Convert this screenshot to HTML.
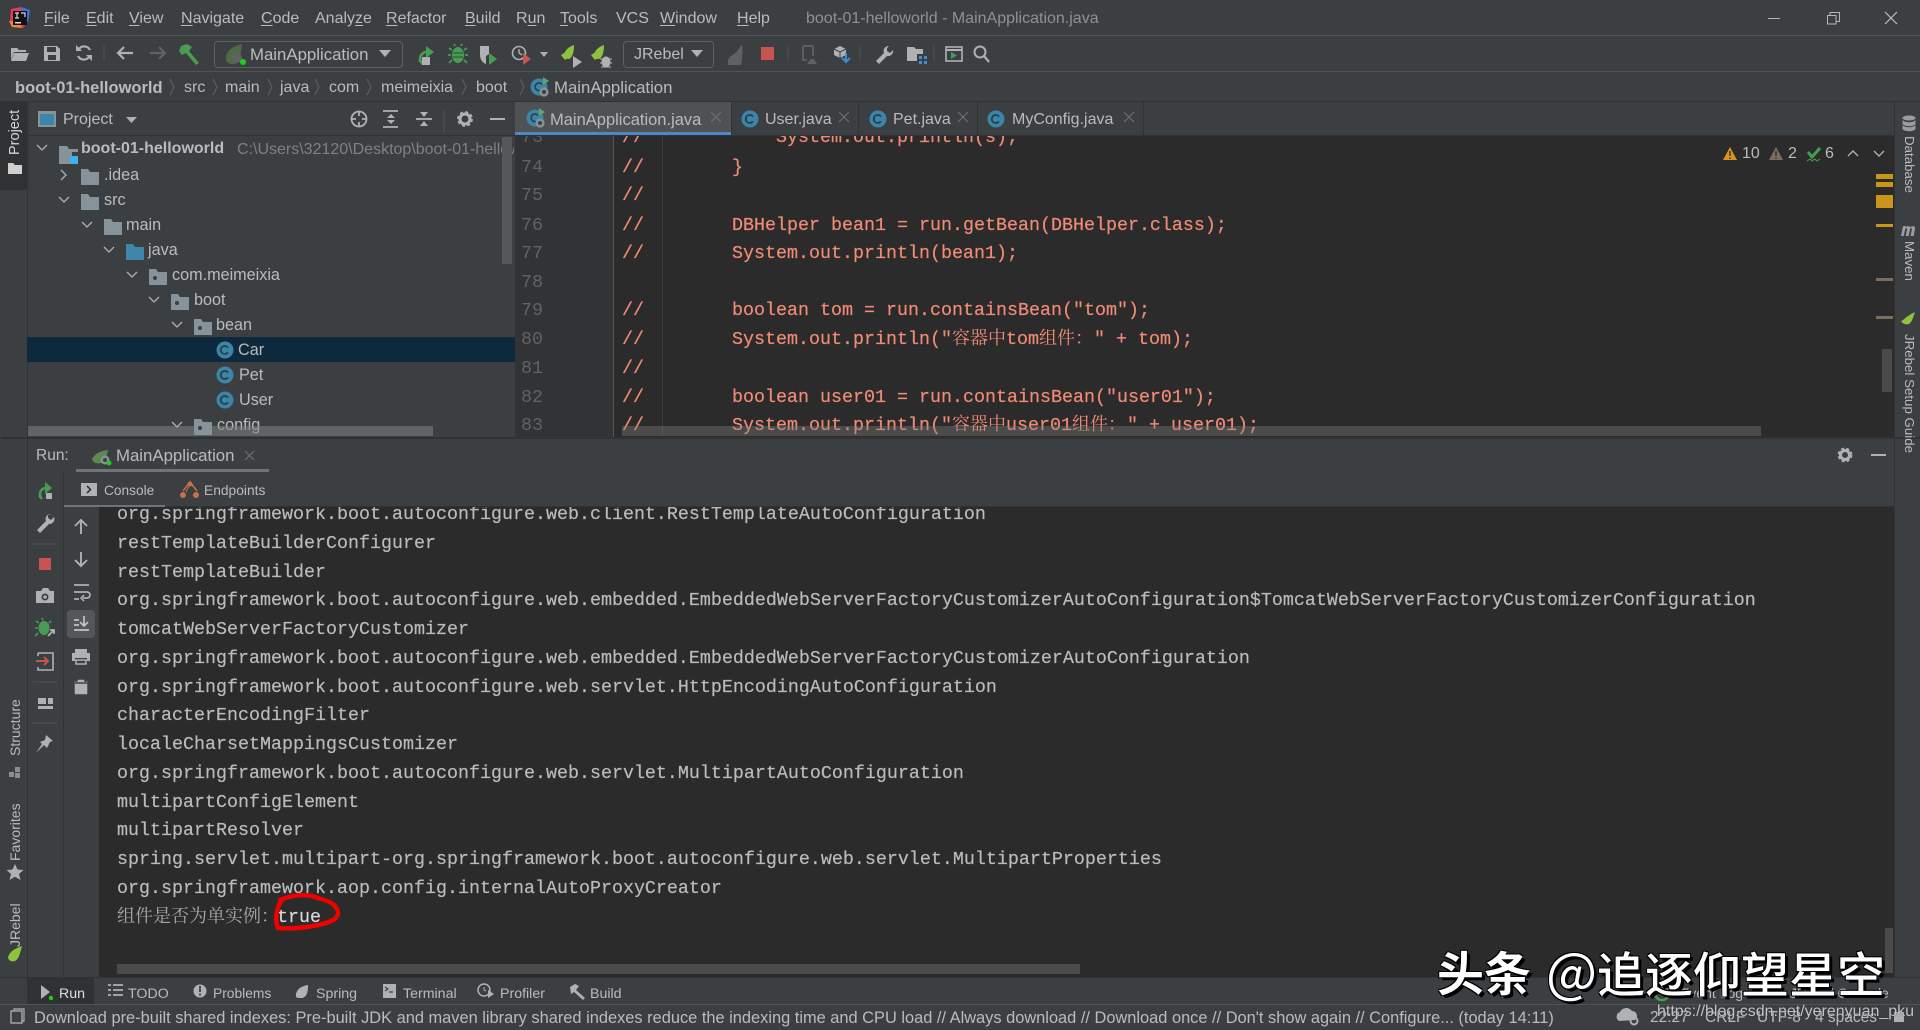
<!DOCTYPE html>
<html lang="en"><head><meta charset="utf-8"><title>boot-01-helloworld - MainApplication.java</title>
<style>
html,body{margin:0;padding:0;width:1920px;height:1030px;overflow:hidden;background:#3c3f41}
body{position:relative;font-family:"Liberation Sans","Noto Sans CJK SC",sans-serif;color:#bbb}
.b{position:absolute}
.t{position:absolute;white-space:nowrap;line-height:20px;color:#bbb}
.m{font-size:16px;top:9px}
.p{font-size:16px;top:78px}
.tr{font-size:16.2px}
.tab{font-size:16px;top:110px}
.v{position:absolute;white-space:nowrap;font-size:14px;line-height:16px;color:#bbb;transform-origin:0 0}
.vr{font-size:13.3px}
.bt{font-size:14.2px;top:984px}
.code,.con{position:absolute;white-space:pre;font-family:"Liberation Mono","Noto Sans CJK SC",monospace;font-size:18.33px;line-height:29px;margin-top:1px;-webkit-text-stroke:.2px}
.code{color:#f28b76}
.ln{position:absolute;left:521px;font-family:"Liberation Mono",monospace;font-size:18.33px;line-height:29px;color:#606366;margin-top:1px}
.con{color:#bbb;left:117px}
.c{font-family:"Noto Serif CJK SC",serif;font-size:18px;line-height:0;-webkit-text-stroke:0}
.clip{position:absolute;overflow:hidden}
svg{position:absolute;left:0;top:0}
u{text-decoration:underline;text-underline-offset:2px}
</style></head><body>

<!-- panels -->
<div class="b" style="left:0;top:35px;width:1920px;height:1px;background:#505355"></div>
<div class="b" style="left:0;top:71px;width:1920px;height:1px;background:#505355"></div>
<div class="b" style="left:0;top:101px;width:1920px;height:1px;background:#323232"></div>
<div class="b" style="left:0;top:102px;width:27px;height:88px;background:#2f3133"></div>
<div class="b" style="left:27px;top:102px;width:1px;height:875px;background:#323232"></div>
<div class="b" style="left:1894px;top:102px;width:1px;height:875px;background:#323232"></div>
<div class="b" style="left:28px;top:135px;width:1866px;height:1px;background:#323232"></div>
<!-- project selection -->
<div class="b" style="left:27px;top:337px;width:488px;height:25px;background:#0d293e"></div>
<!-- tab -->
<div class="b" style="left:515px;top:102px;width:216px;height:30px;background:#4e5254"></div>
<div class="b" style="left:515px;top:132px;width:216px;height:3px;background:#4a88c7"></div>
<div class="b" style="left:731px;top:102px;width:1px;height:33px;background:#323232"></div>
<div class="b" style="left:858px;top:102px;width:1px;height:33px;background:#323232"></div>
<div class="b" style="left:977px;top:102px;width:1px;height:33px;background:#323232"></div>
<div class="b" style="left:1143px;top:102px;width:1px;height:33px;background:#323232"></div>
<!-- editor -->
<div class="b" style="left:515px;top:136px;width:1379px;height:301px;background:#2b2b2b"></div>
<div class="b" style="left:515px;top:136px;width:98px;height:301px;background:#313335"></div>
<div class="b" style="left:613px;top:136px;width:1px;height:301px;background:#555"></div>
<div class="b" style="left:662px;top:136px;width:1px;height:301px;background:#393939"></div>
<div class="b" style="left:1px;top:437px;width:1920px;height:2px;background:#323232"></div>
<!-- console -->
<div class="b" style="left:99px;top:507px;width:1795px;height:470px;background:#2b2b2b"></div>
<div class="b" style="left:63px;top:472px;width:1px;height:505px;background:#323232"></div>
<div class="b" style="left:63px;top:506px;width:1831px;height:1px;background:#323232"></div>
<div class="b" style="left:76px;top:469px;width:193px;height:3px;background:#6e7478"></div>
<div class="b" style="left:64px;top:505px;width:101px;height:2px;background:#6e7478"></div>
<div class="b" style="left:67px;top:610px;width:28px;height:28px;border-radius:4px;background:#53575a"></div>
<div class="b" style="left:0;top:977px;width:1920px;height:1px;background:#323232"></div>
<div class="b" style="left:27px;top:978px;width:67px;height:26px;background:#2f3133"></div>
<div class="b" style="left:0;top:1004px;width:1920px;height:1px;background:#505355"></div>

<!-- menu -->
<div class="t m" style="left:44px"><u>F</u>ile</div>
<div class="t m" style="left:86px"><u>E</u>dit</div>
<div class="t m" style="left:129px"><u>V</u>iew</div>
<div class="t m" style="left:181px"><u>N</u>avigate</div>
<div class="t m" style="left:261px"><u>C</u>ode</div>
<div class="t m" style="left:315px">Analy<u>z</u>e</div>
<div class="t m" style="left:386px"><u>R</u>efactor</div>
<div class="t m" style="left:465px"><u>B</u>uild</div>
<div class="t m" style="left:516px">R<u>u</u>n</div>
<div class="t m" style="left:560px"><u>T</u>ools</div>
<div class="t m" style="left:616px">VCS</div>
<div class="t m" style="left:660px"><u>W</u>indow</div>
<div class="t m" style="left:737px"><u>H</u>elp</div>
<div class="t m" style="left:806px;color:#8f9193">boot-01-helloworld - MainApplication.java</div>

<!-- toolbar combos -->
<div class="b" style="left:214px;top:41px;width:187px;height:25px;border:1px solid #5e6060;border-radius:4px"></div>
<div class="t" style="left:250px;top:45px;font-size:16.8px">MainApplication</div>
<div class="b" style="left:623px;top:41px;width:89px;height:25px;border:1px solid #5e6060;border-radius:4px"></div>
<div class="t" style="left:634px;top:45px;font-size:16px">JRebel</div>

<!-- breadcrumb -->
<div class="t p" style="left:15px;font-weight:700;font-size:16.5px">boot-01-helloworld</div>
<div class="t p" style="left:184px">src</div>
<div class="t p" style="left:225px">main</div>
<div class="t p" style="left:280px">java</div>
<div class="t p" style="left:329px">com</div>
<div class="t p" style="left:381px">meimeixia</div>
<div class="t p" style="left:476px">boot</div>
<div class="t p" style="left:554px;font-size:16.8px">MainApplication</div>

<!-- tool header / tabs -->
<div class="t" style="left:63px;top:110px;font-size:16px">Project</div>
<div class="t tab" style="left:550px;font-size:16.5px">MainApplication.java</div>
<div class="t tab" style="left:765px">User.java</div>
<div class="t tab" style="left:893px">Pet.java</div>
<div class="t tab" style="left:1012px">MyConfig.java</div>

<!-- project tree -->
<div class="clip" style="left:28px;top:136px;width:486px;height:301px">
<div class="t" style="left:53px;top:3px;font-size:16px;font-weight:700">boot-01-helloworld</div>
<div class="t" style="left:209px;top:4px;font-size:16px;color:#808080">C:\Users\32120\Desktop\boot-01-helloworld</div>
<div class="t tr" style="left:76px;top:29px">.idea</div>
<div class="t tr" style="left:76px;top:54px">src</div>
<div class="t tr" style="left:98px;top:79px">main</div>
<div class="t tr" style="left:120px;top:104px">java</div>
<div class="t tr" style="left:144px;top:129px">com.meimeixia</div>
<div class="t tr" style="left:166px;top:154px">boot</div>
<div class="t tr" style="left:188px;top:179px">bean</div>
<div class="t tr" style="left:210px;top:204px">Car</div>
<div class="t tr" style="left:211px;top:229px">Pet</div>
<div class="t tr" style="left:211px;top:254px">User</div>
<div class="t tr" style="left:189px;top:279px">config</div>
</div>

<!-- editor code -->
<div class="clip" style="left:515px;top:136px;width:1379px;height:301px">
<div class="ln" style="left:6px;top:-14px">73</div>
<div class="ln" style="left:6px;top:16px">74</div>
<div class="ln" style="left:6px;top:44px">75</div>
<div class="ln" style="left:6px;top:74px">76</div>
<div class="ln" style="left:6px;top:102px">77</div>
<div class="ln" style="left:6px;top:131px">78</div>
<div class="ln" style="left:6px;top:159px">79</div>
<div class="ln" style="left:6px;top:188px">80</div>
<div class="ln" style="left:6px;top:217px">81</div>
<div class="ln" style="left:6px;top:246px">82</div>
<div class="ln" style="left:6px;top:274px">83</div>
<div class="code" style="left:107px;top:-14px">//            System.out.println(s);</div>
<div class="code" style="left:107px;top:16px">//        }</div>
<div class="code" style="left:107px;top:44px">//</div>
<div class="code" style="left:107px;top:74px">//        DBHelper bean1 = run.getBean(DBHelper.class);</div>
<div class="code" style="left:107px;top:102px">//        System.out.println(bean1);</div>
<div class="code" style="left:107px;top:159px">//        boolean tom = run.containsBean("tom");</div>
<div class="code" style="left:107px;top:188px">//        System.out.println("<span class="c">容器中</span>tom<span class="c">组件<span style="letter-spacing:-10px">：</span></span> " + tom);</div>
<div class="code" style="left:107px;top:217px">//</div>
<div class="code" style="left:107px;top:246px">//        boolean user01 = run.containsBean("user01");</div>
<div class="code" style="left:107px;top:274px">//        System.out.println("<span class="c">容器中</span>user01<span class="c">组件<span style="letter-spacing:-10px">：</span></span> " + user01);</div>
</div>
<div class="t" style="left:1742px;top:144px;font-size:16px">10</div>
<div class="t" style="left:1788px;top:144px;font-size:16px">2</div>
<div class="t" style="left:1825px;top:144px;font-size:16px">6</div>

<!-- markers & scrollbars -->
<div class="b" style="left:1876px;top:174px;width:17px;height:5px;background:#c9961a"></div>
<div class="b" style="left:1876px;top:182px;width:17px;height:5px;background:#c9961a"></div>
<div class="b" style="left:1876px;top:195px;width:17px;height:13px;background:#c9961a"></div>
<div class="b" style="left:1876px;top:224px;width:17px;height:3px;background:#c9961a"></div>
<div class="b" style="left:1876px;top:278px;width:17px;height:3px;background:#7a6f5d"></div>
<div class="b" style="left:1876px;top:316px;width:17px;height:3px;background:#7a6f5d"></div>
<div class="b" style="left:1882px;top:349px;width:10px;height:43px;background:#4b4b4b"></div>
<div class="b" style="left:622px;top:426px;width:1139px;height:10px;background:rgba(130,130,130,.38)"></div>
<div class="b" style="left:28px;top:426px;width:405px;height:10px;background:rgba(130,130,130,.55)"></div>
<div class="b" style="left:502px;top:137px;width:10px;height:127px;background:#55585a"></div>

<!-- run header -->
<div class="t" style="left:36px;top:446px;font-size:15.5px">Run:</div>
<div class="t" style="left:116px;top:446px;font-size:16.8px">MainApplication</div>
<div class="t" style="left:104px;top:481px;font-size:13.7px">Console</div>
<div class="t" style="left:204px;top:481px;font-size:13.8px">Endpoints</div>

<!-- console -->
<div class="clip" style="left:0;top:507px;width:1894px;height:470px">
<div class="con" style="top:-8px">org.springframework.boot.autoconfigure.web.client.RestTemplateAutoConfiguration</div>
<div class="con" style="top:21px">restTemplateBuilderConfigurer</div>
<div class="con" style="top:50px">restTemplateBuilder</div>
<div class="con" style="top:78px">org.springframework.boot.autoconfigure.web.embedded.EmbeddedWebServerFactoryCustomizerAutoConfiguration$TomcatWebServerFactoryCustomizerConfiguration</div>
<div class="con" style="top:107px">tomcatWebServerFactoryCustomizer</div>
<div class="con" style="top:136px">org.springframework.boot.autoconfigure.web.embedded.EmbeddedWebServerFactoryCustomizerAutoConfiguration</div>
<div class="con" style="top:165px">org.springframework.boot.autoconfigure.web.servlet.HttpEncodingAutoConfiguration</div>
<div class="con" style="top:193px">characterEncodingFilter</div>
<div class="con" style="top:222px">localeCharsetMappingsCustomizer</div>
<div class="con" style="top:251px">org.springframework.boot.autoconfigure.web.servlet.MultipartAutoConfiguration</div>
<div class="con" style="top:280px">multipartConfigElement</div>
<div class="con" style="top:308px">multipartResolver</div>
<div class="con" style="top:337px">spring.servlet.multipart-org.springframework.boot.autoconfigure.web.servlet.MultipartProperties</div>
<div class="con" style="top:366px">org.springframework.aop.config.internalAutoProxyCreator</div>
<div class="con" style="top:395px"><span class="c" style="color:#a8a8a8">组件是否为单实例<span style="letter-spacing:-2px">：</span></span><span style="color:#d8d8d8">true</span></div>
</div>
<div class="b" style="left:117px;top:964px;width:963px;height:10px;background:#4b4b4b"></div>
<div class="b" style="left:1885px;top:928px;width:8px;height:45px;background:#4b4b4b"></div>

<!-- vertical labels left -->
<div class="v" style="left:7px;top:155px;transform:rotate(-90deg);font-size:14.5px;color:#d5d5d5">Project</div>
<div class="v" style="left:7px;top:756px;transform:rotate(-90deg)">Structure</div>
<div class="v" style="left:7px;top:861px;transform:rotate(-90deg)">Favorites</div>
<div class="v" style="left:7px;top:947px;transform:rotate(-90deg)">JRebel</div>
<!-- vertical labels right -->
<div class="v vr" style="left:1917px;top:136px;transform:rotate(90deg)">Database</div>
<div class="v vr" style="left:1917px;top:241px;transform:rotate(90deg)">Maven</div>
<div class="v vr" style="left:1917px;top:334px;transform:rotate(90deg)">JRebel Setup Guide</div>

<!-- bottom tool strip -->
<div class="t bt" style="left:59px;color:#ddd">Run</div>
<div class="t bt" style="left:128px">TODO</div>
<div class="t bt" style="left:213px;font-size:13.8px">Problems</div>
<div class="t bt" style="left:316px">Spring</div>
<div class="t bt" style="left:403px">Terminal</div>
<div class="t bt" style="left:500px">Profiler</div>
<div class="t bt" style="left:590px">Build</div>
<div class="t" style="left:1680px;top:983px;font-size:14px">Event Log</div>
<div class="t" style="left:1790px;top:983px;font-size:14px">JRebel Console</div>

<!-- status bar -->
<div class="t" style="left:34px;top:1008px;font-size:16.4px">Download pre-built shared indexes: Pre-built JDK and maven library shared indexes reduce the indexing time and CPU load // Always download // Download once // Don't show again // Configure... (today 14:11)</div>
<div class="t" style="left:1650px;top:1008px;font-size:15.5px">22:27</div>
<div class="t" style="left:1705px;top:1008px;font-size:15.5px">CRLF</div>
<div class="t" style="left:1757px;top:1008px;font-size:15.5px">UTF-8</div>
<div class="t" style="left:1815px;top:1008px;font-size:15.5px">4 spaces</div>

<!-- icons -->
<svg width="1920" height="1030" viewBox="0 0 1920 1030" fill="none">
<defs>
<symbol id="fo" viewBox="0 0 18 16" overflow="visible"><path d="M0 0h7l2 3h9v13H0z" fill="#87939a"/></symbol>
<symbol id="pk" viewBox="0 0 18 16" overflow="visible"><path d="M0 0h7l2 3h9v13H0z" fill="#87939a"/><circle cx="6" cy="9" r="2" fill="#3c3f41"/></symbol>
<symbol id="cl" viewBox="0 0 18 18" overflow="visible"><circle cx="9" cy="9" r="8.5" fill="#3b86a8"/><path d="M12 6.7A4 4 0 1 0 12 11.3" stroke="#2b3d47" stroke-width="1.8"/></symbol>
<symbol id="sb" viewBox="0 0 20 20" overflow="visible"><circle cx="9" cy="10" r="8.5" fill="#3b86a8"/><path d="M12 7.5A3.8 3.8 0 1 0 11 13" stroke="#2b3d47" stroke-width="1.6"/><path d="M13 0l6 4-6 4z" fill="#59a869"/><circle cx="14" cy="15" r="4.6" fill="#8a9196"/><circle cx="14" cy="15" r="2" fill="#3c3f41"/></symbol>
</defs>

<!-- IDEA logo -->
<path d="M11 9l10-2 9 3-2 12-5 6-10-1-3-6z" fill="#e8385b"/><path d="M21 7l9 3-2 12-4 1z" fill="#3d6fe0"/><path d="M9 21l3 6 10 1-3-6z" fill="#f0882c"/><rect x="13" y="11" width="14" height="14" fill="#111"/><rect x="15" y="22" width="6" height="1.5" fill="#ddd"/><path d="M15 13h4M17 13v5M15 18h4M21 13h4v4" stroke="#ddd" stroke-width="1.2"/>

<!-- window controls -->
<path d="M1768 18.5h12" stroke="#b5b5b5" stroke-width="1"/>
<path d="M1827.5 15.5h8.5v8.5h-8.5zM1830 15.5v-3h9.5v9h-3.5" stroke="#b5b5b5" stroke-width="1"/>
<path d="M1885 12l12 12M1897 12l-12 12" stroke="#c5c5c5" stroke-width="1.1"/>

<g transform="translate(0 9)">
<!-- toolbar left -->
<path d="M11 39h6l2 2h7v2H14l-3 8zM14 44h15l-3 8H11z" fill="#afb1b3"/>
<path d="M44 37h13l3 3v12H44zM47 38v5h9v-5zM48 46h8v5h-8z" fill="#afb1b3" fill-rule="evenodd"/>
<path d="M90 41a6.5 6.5 0 0 0-11-1M78 47a6.5 6.5 0 0 0 11 1" stroke="#afb1b3" stroke-width="2.2"/><path d="M76 36v6h6zM92 52v-6h-6z" fill="#afb1b3"/><path d="M104 36v16" stroke="#505355"/>
<path d="M133 44h-15M124 38l-6 6 6 6" stroke="#afb1b3" stroke-width="2.2"/>
<path d="M150 44h15M159 38l6 6-6 6" stroke="#5f6264" stroke-width="2.2"/>
<path d="M181 37l6-2 5 3-3 4 10 12-3 2-10-12-4 2-3-4z" fill="#499c54"/>

<!-- config combo -->
<g transform="translate(0 -3)"><path d="M226 54c-1-9 7-14 16-16-1 8-2 18-7 20-5 1-8-1-9-4z" fill="#4f6b45"/><circle cx="237" cy="52" r="5" fill="#5f6264"/><circle cx="243" cy="56" r="3" fill="#17d317"/></g>
<path d="M379 41h12l-6 7z" fill="#afb1b3"/>

<!-- run icons -->
<g transform="translate(-7 0)"><path d="M427 53v-3a7 7 0 0 1 7-7h2" stroke="#499c54" stroke-width="2.6"/><path d="M430 55a8 8 0 0 1-3-5" stroke="#499c54" stroke-width="2.6"/><path d="M433 37l8 6-8 6z" fill="#499c54"/><rect x="429" y="48" width="8" height="8" fill="#afb1b3"/></g>
<ellipse cx="458" cy="46" rx="6" ry="8" fill="#499c54"/><path d="M452 41l-3-2M464 41l3-2M451 46h-3M465 46h3M452 51l-3 3M464 51l3 3M455 37l-1-2M461 37l1-2" stroke="#499c54" stroke-width="1.8"/><path d="M453 44h10M453 48h10" stroke="#2f4a34" stroke-width="1"/>
<g transform="translate(-2 0)"><path d="M482 37h9v8l-3 2v8c-3-1-6-4-6-9z" fill="#afb1b3"/><path d="M491 44l8 6-8 6z" fill="#499c54"/></g>
<circle cx="519" cy="44" r="6.5" stroke="#afb1b3" stroke-width="1.6"/><path d="M519 40v4l3 2" stroke="#afb1b3" stroke-width="1.4"/><path d="M523 44l8 6-8 6z" fill="#c75450"/><path d="M540 43h8l-4 5z" fill="#afb1b3"/>
<g transform="translate(3 0)"><path d="M560 49c1-7 5-11 11-13 0 6-1 12-5 14z" fill="#8ec23f"/><path d="M558 46l3-2 4 5-3 2z" fill="#8ec23f"/><path d="M570 47l9 6-9 6z" fill="#afb1b3"/></g>
<path d="M593 49c1-7 5-11 11-13 0 6-1 12-5 14z" fill="#8ec23f"/><path d="M591 46l3-2 4 5-3 2z" fill="#8ec23f"/><ellipse cx="606" cy="53" rx="4.5" ry="5.5" fill="#afb1b3"/><path d="M600 50l12 0M600 54h12M601 58h10" stroke="#afb1b3"/>
<path d="M691 41h12l-6 7z" fill="#afb1b3"/>
<path d="M728 52c1-6 7-6 9-10l5-6c1 6 0 16-1 20h-13z" fill="#5f6264"/>
<rect x="761" y="38" width="13" height="13" fill="#c75450"/>
<path d="M788 36v16" stroke="#505355"/>
<path d="M803 37h10v10M803 37v14h4" stroke="#5f6264" stroke-width="1.8"/><path d="M807 55l4-5h3l3 5z" fill="#5f6264"/>
<path d="M834 40l6-3 6 3v6l-6 3-6-3z" fill="#afb1b3"/><path d="M834 40l6 3 6-3M840 43v6" stroke="#3c3f41"/><path d="M846 44v8M842 49l4 4 4-4" stroke="#3d8fd1" stroke-width="2"/>
<path d="M860 36v16" stroke="#505355"/>
<path d="M889 37a5 5 0 0 0-5 7l-8 8 3 3 8-8a5 5 0 0 0 6-6l-3 3-3-2v-3z" fill="#afb1b3"/>
<path d="M907 38h7l2 2h7v5h-6v7h-10z" fill="#afb1b3"/><rect x="919" y="47" width="3" height="3" fill="#3d8fd1"/><rect x="924" y="47" width="3" height="3" fill="#3d8fd1"/><rect x="919" y="52" width="3" height="3" fill="#3d8fd1"/><rect x="924" y="52" width="3" height="3" fill="#3d8fd1"/>
<path d="M934 36v16" stroke="#505355"/>
<rect x="946" y="38" width="16" height="14" stroke="#afb1b3" stroke-width="1.6"/><path d="M946 41h16" stroke="#afb1b3" stroke-width="2"/><path d="M951 43l6 3.5-6 3.5z" fill="#499c54"/>
<circle cx="980" cy="43" r="5.5" stroke="#afb1b3" stroke-width="2"/><path d="M984 47l5 6" stroke="#afb1b3" stroke-width="2.2"/>
</g>

<!-- breadcrumb chevrons -->
<path d="M170 79l4 8-4 8M213 79l4 8-4 8M268 79l4 8-4 8M315 79l4 8-4 8M367 79l4 8-4 8M462 79l4 8-4 8M520 79l4 8-4 8" stroke="#5e6264"/>
<use href="#sb" x="530" y="77" width="20" height="20"/>

<!-- project header -->
<rect x="39" y="112" width="16" height="14" fill="#3b86a8" stroke="#87939a" stroke-width="2"/><rect x="38" y="111" width="18" height="3" fill="#87939a"/>
<path d="M126 117h11l-5.500 6z" fill="#afb1b3"/>
<circle cx="359" cy="119" r="7.500" stroke="#afb1b3" stroke-width="1.800"/><path d="M359 111v5M359 122v5M351 119h5M362 119h5" stroke="#afb1b3" stroke-width="1.800"/>
<path d="M383 111h15M383 127h15" stroke="#afb1b3" stroke-width="1.800"/><path d="M391 114l4 4h-8zM391 124l4-4h-8z" fill="#afb1b3"/>
<path d="M416 119h16" stroke="#afb1b3" stroke-width="1.800"/><path d="M424 117l4-5h-8zM424 121l4 5h-8z" fill="#afb1b3"/>
<path d="M444 110v22" stroke="#505355"/>
<circle cx="465" cy="119" r="5" stroke="#afb1b3" stroke-width="3"/><circle cx="465" cy="119" r="7" stroke="#afb1b3" stroke-width="1.800" stroke-dasharray="3 2.500"/>
<path d="M490 119h15" stroke="#afb1b3" stroke-width="2"/>
<use href="#sb" x="526" y="108" width="20" height="20"/>
<path d="M711 112l10 10M721 112l-10 10M839 112l10 10M849 112l-10 10M958 112l10 10M968 112l-10 10M1124 112l10 10M1134 112l-10 10" stroke="#6e7173" stroke-width="1.100"/>
<use href="#cl" x="741" y="110" width="18" height="18"/><use href="#cl" x="869" y="110" width="18" height="18"/><use href="#cl" x="987" y="110" width="18" height="18"/>

<!-- left strip -->
<path d="M8 163h5l2 2h7v9H8z" fill="#cfcfcf"/>
<path d="M9 772h5v5H9zM15 767h5v5h-5zM15 773h5v5h-5z" fill="#8a8f92"/>
<path d="M15 864l2.500 5.500 6 .5-4.500 4 1.500 6-5.500-3.300-5.500 3.300 1.500-6-4.500-4 6-.5z" fill="#afb1b3"/>
<path d="M8 958c1-6 6-9 14-12-2 7-3 13-7 15-3 1-6 0-7-3z" fill="#8ec23f"/>

<!-- tree icons -->
<path d="M37 145l5 5 5-5" stroke="#afb1b3" stroke-width="1.300"/>
<path d="M59 146h8l2 3h9v3h-6v12H59z" fill="#87939a"/><rect x="70" y="156" width="8" height="8" fill="#3db3e8"/>
<path d="M61 170l5 5-5 5" stroke="#afb1b3" stroke-width="1.300"/>
<use href="#fo" x="81" y="169" width="18" height="16"/>
<path d="M59 197l5 5 5-5" stroke="#afb1b3" stroke-width="1.300"/>
<use href="#fo" x="81" y="194" width="18" height="16"/>
<path d="M82 222l5 5 5-5" stroke="#afb1b3" stroke-width="1.300"/>
<use href="#fo" x="104" y="219" width="18" height="16"/>
<path d="M104 247l5 5 5-5" stroke="#afb1b3" stroke-width="1.300"/>
<path d="M126 244h7l2 3h9v13h-18z" fill="#3f86aa"/>
<path d="M127 272l5 5 5-5" stroke="#afb1b3" stroke-width="1.300"/>
<use href="#pk" x="149" y="269" width="18" height="16"/>
<path d="M149 297l5 5 5-5" stroke="#afb1b3" stroke-width="1.300"/>
<use href="#pk" x="171" y="294" width="18" height="16"/>
<path d="M172 322l5 5 5-5" stroke="#afb1b3" stroke-width="1.300"/>
<use href="#pk" x="194" y="319" width="18" height="16"/>
<use href="#cl" x="216" y="341" width="18" height="18"/>
<use href="#cl" x="216" y="366" width="18" height="18"/>
<use href="#cl" x="216" y="391" width="18" height="18"/>
<path d="M172 422l5 5 5-5" stroke="#afb1b3" stroke-width="1.300"/>
<use href="#pk" x="194" y="419" width="18" height="16"/>

<!-- inspections -->
<path d="M1730 147l7 13h-14z" fill="#d9951a"/><path d="M1730 151v5M1730 157.500v1.500" stroke="#333" stroke-width="1.500"/>
<path d="M1776 147l7 13h-14z" fill="#7a6f5d"/><path d="M1776 151v5M1776 157.500v1.500" stroke="#333" stroke-width="1.500"/>
<path d="M1808 152l4 5 8-9" stroke="#499c54" stroke-width="3"/><path d="M1807 161l3-2 2 2 3-2 2 2 3-2" stroke="#499c54"/>
<path d="M1848 156l5-5 5 5M1874 151l5 5 5-5" stroke="#afb1b3" stroke-width="1.400"/>

<!-- right strip -->
<ellipse cx="1909" cy="118" rx="6.500" ry="2.500" fill="#9a9da0"/><path d="M1902.500 120v4c2 3 11 3 13 0v-4c-2 3-11 3-13 0zM1902.500 125v4c2 3 11 3 13 0v-4c-2 3-11 3-13 0z" fill="#9a9da0"/>
<path d="M1901 236l2-10h3l-.400 1.500c1.500-2 4-2 4.500 0 1.500-2 5.500-2 5 1l-1.500 7.500h-3l1.400-7c0-1-1.500-1-2 .5l-1.300 6.500h-3l1.400-7c0-1-1.500-1-2 .5l-1.300 6.500z" fill="#9a9da0"/>
<path d="M1901 321c3-1 4-4 14-9-2 6-3 10-6 12-3 1-6 0-8-3z" fill="#8ec23f"/>

<!-- run header icons -->
<path d="M92 459c3-6 9-8 16-9-1 5-2 12-7 13-4 1-8 0-9-4z" fill="#5c8a52"/><circle cx="105" cy="460" r="4.500" fill="#8a9196"/><circle cx="105" cy="460" r="2" fill="#3c3f41"/><circle cx="109" cy="463" r="2.500" fill="#17d317"/>
<path d="M245 451l9 9M254 451l-9 9" stroke="#6e7173" stroke-width="1.200"/>
<circle cx="1845" cy="455" r="4.500" stroke="#afb1b3" stroke-width="3"/><circle cx="1845" cy="455" r="6.500" stroke="#afb1b3" stroke-width="1.800" stroke-dasharray="3 2.300"/>
<path d="M1871 455h15" stroke="#afb1b3" stroke-width="2"/>
<rect x="81" y="483" width="16" height="13" fill="#afb1b3"/><path d="M87 486l3.500 3.500-3.500 3.500" stroke="#2b2b2b" stroke-width="1.500"/>
<path d="M183 491l7-9 7 9" stroke="#c8704a" stroke-width="1.500"/><circle cx="190" cy="484" r="2.500" fill="#c8704a"/><circle cx="183" cy="495" r="3" fill="#c8704a"/><circle cx="196" cy="495" r="3" fill="#c8704a"/><path d="M190 484l-4 8" stroke="#c8704a"/>

<!-- run col 1 -->
<path d="M40 498v-4a6 6 0 0 1 6-6h2" stroke="#499c54" stroke-width="2.500"/><path d="M42 499a7 7 0 0 1-2-4" stroke="#499c54" stroke-width="2.500"/><path d="M45 482l7 6-7 6z" fill="#499c54"/><rect x="46" y="493" width="6" height="6" fill="#afb1b3"/>
<path d="M51 514a5 5 0 0 0-5 7l-9 9 3 3 9-9a5 5 0 0 0 5-7l-3 3-3-2v-3z" fill="#afb1b3"/>
<path d="M33 544h24M33 682h24M33 723h24" stroke="#505355"/>
<rect x="39" y="558" width="12" height="12" fill="#c75450"/>
<path d="M36 591h5l2-3h5l2 3h4v12H36z" fill="#afb1b3"/><circle cx="45" cy="597" r="3.500" fill="#3c3f41"/><circle cx="45" cy="597" r="1.800" fill="#afb1b3"/>
<ellipse cx="44" cy="628" rx="5.500" ry="7" fill="#499c54"/><path d="M39 623l-3-2M49 623l2-2M38 628h-3M38 633l-3 3M43 620l-1-2" stroke="#499c54" stroke-width="1.600"/><path d="M48 636l6-6M50 630h4v4" stroke="#afb1b3" stroke-width="1.800"/>
<path d="M38 653h15v17H38v-3M38 653v3" stroke="#afb1b3" stroke-width="1.600"/><path d="M36 661h11" stroke="#c75450" stroke-width="2"/><path d="M44 657l4 4-4 4" stroke="#c75450" stroke-width="2"/>
<path d="M38 698h8v6h-8zM48 698h5v6h-5zM38 706h15v3H38z" fill="#afb1b3"/>
<path d="M46 735l7 6-3 1-3 6-3-3-8 8 6-9-2-2 5-2z" fill="#afb1b3"/>

<!-- run col 2 -->
<path d="M81 534v-14M75 526l6-6 6 6M81 566v-14M75 560l6 6 6-6" stroke="#afb1b3" stroke-width="1.900"/>
<path d="M74 585h15M74 592h13a2.500 2.500 0 0 1 0 6h-4M74 599h5" stroke="#afb1b3" stroke-width="1.700"/><path d="M84 595l-3 3 3 3" stroke="#afb1b3" stroke-width="1.500"/>
<path d="M74 630h15M74 620h5M74 625h5M84 616v9M80 622l4 4 4-4" stroke="#c2c4c6" stroke-width="1.700"/>
<path d="M75 649h12v4h3v8h-3v-3h-12v3h-3v-8h3z" fill="#afb1b3"/><rect x="76" y="660" width="10" height="4" stroke="#afb1b3" stroke-width="1.500"/>
<path d="M74 682h14M78 682v-2h6v2M75 684h12v10H75z" fill="#afb1b3" stroke="#afb1b3" stroke-width=".6"/>

<!-- bottom strip icons -->
<path d="M41 985l9 7-9 7z" fill="#afb1b3"/><circle cx="51" cy="998" r="2.200" fill="#17d317"/>
<path d="M113 985h10M113 990h10M113 995h10M108 985h3M108 990h3M108 995h3" stroke="#afb1b3" stroke-width="1.800"/>
<circle cx="200" cy="991" r="6.500" fill="#afb1b3"/><path d="M200 986v6M200 993.500v2" stroke="#3c3f41" stroke-width="1.800"/>
<path d="M296 997c-1-7 5-11 12-12 0 7-1 12-6 13-3 0-5 0-6-1z" fill="#afb1b3"/>
<rect x="383" y="984" width="13" height="14" fill="#afb1b3"/><path d="M385 987l3 2-3 2M389 992h4" stroke="#3c3f41" stroke-width="1.200"/>
<circle cx="484" cy="990" r="6" stroke="#afb1b3" stroke-width="1.500"/><path d="M484 987v3l2 1" stroke="#afb1b3"/><path d="M488 990l6 4-6 4z" fill="#afb1b3"/>
<path d="M570 987l5-3 4 2-3 4 9 8-2 2-9-8-3 2z" fill="#afb1b3"/>
<circle cx="1662" cy="993" r="7" stroke="#499c54" stroke-width="2.500"/>
<!-- status icons -->
<rect x="11" y="1011" width="11" height="12" stroke="#afb1b3" stroke-width="1.300"/><path d="M14 1011v-2h10v12h-2" stroke="#afb1b3" stroke-width="1.200"/>
<path d="M1619 1021a5 5 0 0 1 1-9 7 7 0 0 1 12-1 5 5 0 0 1 3 9z" fill="#afb1b3"/><circle cx="1634" cy="1021" r="3.500" stroke="#afb1b3" stroke-width="2"/>
<rect x="1894" y="1012" width="10" height="10" fill="#afb1b3"/>

<!-- red annotation -->
<path d="M280 900c12-5 26-7 38-2 8 2 19 6 20 14 1 7-10 11-20 13-14 3-27 4-40 3-3-7-2-16 1-23 1-2 2-4 3-5" stroke="#f00000" stroke-width="4.500" stroke-linecap="round" stroke-linejoin="round"/>
</svg>

<!-- watermark -->
<div class="t" style="left:1437px;top:936px;font-family:'Noto Sans CJK SC',sans-serif;font-size:47px;line-height:70px;font-weight:700;color:#fff;text-shadow:3px 3px 0 #000,-1px -1px 0 #000,1px -1px 0 #000,-1px 1px 0 #000">头条</div>
<div class="t" style="left:1546px;top:934px;font-family:'Noto Sans CJK SC',sans-serif;font-size:54px;line-height:70px;font-weight:400;color:#fff;text-shadow:3px 3px 0 #000,-1px -1px 0 #000,1px -1px 0 #000,-1px 1px 0 #000">@</div>
<div class="t" style="left:1597px;top:936px;font-family:'Noto Sans CJK SC',sans-serif;font-size:48px;line-height:70px;font-weight:500;color:#fff;text-shadow:3px 3px 0 #000,-1px -1px 0 #000,1px -1px 0 #000,-1px 1px 0 #000">追逐仰望星空</div>
<div class="t" style="left:1657px;top:1002px;font-size:16px;color:#c4c4c4;text-shadow:0 0 1px #222">https://blog.csdn.net/yerenyuan_pku</div>
</body></html>
